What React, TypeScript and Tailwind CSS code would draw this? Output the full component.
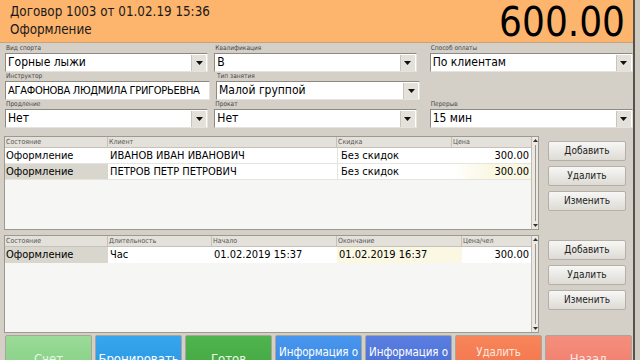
import React from 'react'

const font = { fontFamily: '"DejaVu Sans Condensed", "DejaVu Sans", sans-serif', fontStretch: 'condensed' as const }

// small triangle button used by combo boxes
function DropBtn() {
  return (
    <div className="w-[15px] h-[16px] mt-[1px] mr-[1px] bg-[#e4e1da] border-l border-[#c9c5bc] flex items-center justify-center">
      <svg width="7" height="4" viewBox="0 0 7 4">
        <path d="M0 0h7L3.5 4z" fill="#111" />
      </svg>
    </div>
  )
}

function Field({ label, value, combo = true, width, small = false }: { label: string; value?: string; combo?: boolean; width: string; small?: boolean }) {
  return (
    <div className={`${width} flex flex-col`}>
      <div className="h-[9px] text-[6.5px] leading-[9px] text-[#444] pl-[1px]">{label}</div>
      {value !== undefined ? (
        <div className="h-[19px] bg-white border border-[#8e8a82] border-r-[#e6e3dc] border-b-[#e6e3dc] flex items-start">
          <div className={`flex-1 leading-[17px] text-black pl-[2px] whitespace-nowrap overflow-hidden ${small ? 'text-[11px] tracking-[-0.3px]' : 'text-[12px]'}`}>{value}</div>
          {combo && <DropBtn />}
        </div>
      ) : (
        <div className="h-[19px]" />
      )}
    </div>
  )
}

function SideBtn({ text }: { text: string }) {
  return (
    <div className="w-[78px] h-[20px] rounded-[2px] border border-[#b4b0a8] bg-gradient-to-b from-[#f7f7f5] to-[#dedbd5] text-[10px] leading-[18px] text-[#222] text-center">
      {text}
    </div>
  )
}

function Scroll() {
  return (
    <div className="w-[7px] bg-[#ece9e2] border-l border-[#c0bcb3] flex flex-col justify-between items-center">
      <svg width="5" height="6" viewBox="0 0 5 6" className="mt-[1px]">
        <path d="M0 4h5L2.5 1z" fill="#333" />
      </svg>
      <div className="flex-1 w-[1px] bg-[#9a968e] my-[1px]" />
      <svg width="5" height="6" viewBox="0 0 5 6" className="mb-[1px]">
        <path d="M0 2h5L2.5 5z" fill="#333" />
      </svg>
    </div>
  )
}

const clients = [
  { st: 'Оформление', name: 'ИВАНОВ ИВАН ИВАНОВИЧ', disc: 'Без скидок', price: '300.00', sel: false },
  { st: 'Оформление', name: 'ПЕТРОВ ПЕТР ПЕТРОВИЧ', disc: 'Без скидок', price: '300.00', sel: true },
]

const bottom = [
  { t: 'Счет', cls: 'from-[#9adb98] to-[#7fcb7d] text-[#e9f7e6]', top: false },
  { t: 'Бронировать', cls: 'from-[#37a6ee] to-[#2493df] text-white', top: false },
  { t: 'Готов', cls: 'from-[#50b44e] to-[#3ea43c] text-[#eef8ea]', top: false },
  { t: 'Информация о', cls: 'from-[#4896ee] to-[#3782e0] text-white', top: true },
  { t: 'Информация о', cls: 'from-[#5a7fe0] to-[#4466d2] text-white', top: true },
  { t: 'Удалить', cls: 'from-[#f8855a] to-[#f06f48] text-[#fde8de]', top: true },
  { t: 'Назад', cls: 'from-[#f58e7d] to-[#ef7866] text-[#fde6e0]', top: false },
]

export default function App() {
  return (
    <div className="w-[640px] h-[360px] overflow-hidden bg-[#d4d0c8] flex" style={font}>
      <div className="w-[635px] h-full flex flex-col border-r-2 border-[#55524c]">
        {/* Header */}
        <div className="h-[43px] bg-[#fdb46c] border-b border-[#c8a27a] flex justify-between items-start pl-[10px] pr-[8px]">
          <div className="pt-[3px] text-[13.3px] leading-[18px] text-[#1a1a1a]">
            <div>Договор 1003 от 01.02.19 15:36</div>
            <div>Оформление</div>
          </div>
          <div className="text-[40px] leading-[44px] text-black">600.00</div>
        </div>

        {/* Form */}
        <div className="flex flex-col pl-[5px] pt-[1px]">
          <div className="flex gap-[6px]">
            <Field width="w-[205px]" label="Вид спорта" value="Горные лыжи" />
            <Field width="w-[204px]" label="Квалификация" value="B" />
            <div className="w-[1px]" />
            <Field width="w-[205px]" label="Способ оплаты" value="По клиентам" />
          </div>
          <div className="flex gap-[6px]">
            <Field width="w-[205px]" label="Инструктор" value="АГАФОНОВА ЛЮДМИЛА ГРИГОРЬЕВНА" combo={false} small />
            <Field width="w-[204px]" label="Тип занятия" value="Малой группой" />
          </div>
          <div className="flex gap-[6px]">
            <Field width="w-[205px]" label="Продление" value="Нет" />
            <Field width="w-[204px]" label="Прокат" value="Нет" />
            <div className="w-[1px]" />
            <Field width="w-[205px]" label="Перерыв" value="15 мин" />
          </div>
        </div>

        {/* Clients grid */}
        <div className="flex mt-[8px] pl-[4px]">
          <div className="w-[535px] h-[94px] flex bg-[#f6f6f5] border border-[#9d998f]">
            <div className="flex-1 flex flex-col">
              <div className="h-[11px] flex bg-[#e4e1da] border-b border-[#c6c2b9] text-[7px] leading-[11px] text-[#555]">
                <div className="w-[103px] pl-[1px] border-r border-[#c6c2b9]">Состояние</div>
                <div className="w-[229px] pl-[1px] border-r border-[#c6c2b9]">Клиент</div>
                <div className="w-[115px] pl-[1px] border-r border-[#c6c2b9]">Скидка</div>
                <div className="flex-1 pl-[1px]">Цена</div>
              </div>
              {clients.map((c, i) => (
                <div key={i} className="h-[16px] flex text-[11px] leading-[16px] text-black border-b border-[#e6e4de]">
                  <div className={`w-[103px] pl-[1px] ${c.sel ? 'bg-[#d9d6cd]' : 'bg-white'}`}>{c.st}</div>
                  <div className="w-[229px] pl-[2px] bg-white">{c.name}</div>
                  <div className="w-[115px] pl-[3px] bg-white border-l border-[#e6e4de]">{c.disc}</div>
                  <div className={`flex-1 text-right pr-[2px] ${c.sel ? 'bg-gradient-to-r from-white via-[#faf7e2] to-[#faf7e2]' : 'bg-white'}`}>{c.price}</div>
                </div>
              ))}
            </div>
            <Scroll />
          </div>
          <div className="flex flex-col gap-[5px] pl-[9px] pt-[5px]">
            <SideBtn text="Добавить" />
            <SideBtn text="Удалить" />
            <SideBtn text="Изменить" />
          </div>
        </div>

        {/* Lessons grid */}
        <div className="flex mt-[5px] pl-[4px]">
          <div className="w-[535px] h-[98px] flex bg-[#f6f6f5] border border-[#9d998f]">
            <div className="flex-1 flex flex-col">
              <div className="h-[11px] flex bg-[#e4e1da] border-b border-[#c6c2b9] text-[7px] leading-[11px] text-[#555]">
                <div className="w-[103px] pl-[1px] border-r border-[#c6c2b9]">Состояние</div>
                <div className="w-[104px] pl-[1px] border-r border-[#c6c2b9]">Длительность</div>
                <div className="w-[125px] pl-[1px] border-r border-[#c6c2b9]">Начало</div>
                <div className="w-[125px] pl-[1px] border-r border-[#c6c2b9]">Окончание</div>
                <div className="flex-1 pl-[1px]">Цена/чел</div>
              </div>
              <div className="h-[16px] flex text-[11px] leading-[16px] text-black">
                <div className="w-[103px] pl-[1px] bg-[#d9d6cd]">Оформление</div>
                <div className="w-[104px] pl-[2px] bg-white">Час</div>
                <div className="w-[125px] pl-[2px] bg-white">01.02.2019 15:37</div>
                <div className="w-[125px] pl-[2px] bg-[#faf7e2]">01.02.2019 16:37</div>
                <div className="flex-1 text-right pr-[2px] bg-white">300.00</div>
              </div>
            </div>
            <Scroll />
          </div>
          <div className="flex flex-col gap-[5px] pl-[9px] pt-[5px]">
            <SideBtn text="Добавить" />
            <SideBtn text="Удалить" />
            <SideBtn text="Изменить" />
          </div>
        </div>

        {/* Bottom buttons */}
        <div className="flex gap-[3px] mt-[2px] pl-[5px] pr-[1px]">
          {bottom.map((b, i) => (
            <div
              key={i}
              className={`h-[50px] flex-1 min-w-0 rounded-[2px] border border-[#a9a59d] bg-gradient-to-b ${b.cls} whitespace-nowrap overflow-hidden text-center leading-[17px] ${b.top ? 'text-[11.5px] tracking-[-0.1px] pt-[8px]' : 'text-[13px] pt-[14px]'}`}
            >
              {b.t}
            </div>
          ))}
        </div>
      </div>
      <div className="flex-1 bg-[#cfcbc2]" />
    </div>
  )
}
